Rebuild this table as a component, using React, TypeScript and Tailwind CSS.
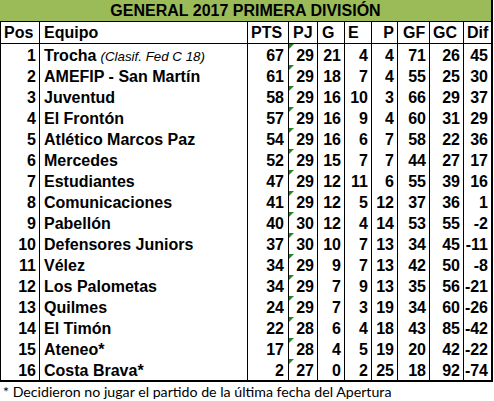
import React from 'react';

type Row = {
  pos: number;
  team: string;
  note?: string;
  stats: number[]; // PTS PJ G E P GF GC Dif
};

const rows: Row[] = [
  { pos: 1, team: 'Trocha', note: '(Clasif. Fed C 18)', stats: [67, 29, 21, 4, 4, 71, 26, 45] },
  { pos: 2, team: 'AMEFIP - San Martín', stats: [61, 29, 18, 7, 4, 55, 25, 30] },
  { pos: 3, team: 'Juventud', stats: [58, 29, 16, 10, 3, 66, 29, 37] },
  { pos: 4, team: 'El Frontón', stats: [57, 29, 16, 9, 4, 60, 31, 29] },
  { pos: 5, team: 'Atlético Marcos Paz', stats: [54, 29, 16, 6, 7, 58, 22, 36] },
  { pos: 6, team: 'Mercedes', stats: [52, 29, 15, 7, 7, 44, 27, 17] },
  { pos: 7, team: 'Estudiantes', stats: [47, 29, 12, 11, 6, 55, 39, 16] },
  { pos: 8, team: 'Comunicaciones', stats: [41, 29, 12, 5, 12, 37, 36, 1] },
  { pos: 9, team: 'Pabellón', stats: [40, 30, 12, 4, 14, 53, 55, -2] },
  { pos: 10, team: 'Defensores Juniors', stats: [37, 30, 10, 7, 13, 34, 45, -11] },
  { pos: 11, team: 'Vélez', stats: [34, 29, 9, 7, 13, 42, 50, -8] },
  { pos: 12, team: 'Los Palometas', stats: [34, 29, 7, 9, 13, 35, 56, -21] },
  { pos: 13, team: 'Quilmes', stats: [24, 29, 7, 3, 19, 34, 60, -26] },
  { pos: 14, team: 'El Timón', stats: [22, 28, 6, 4, 18, 43, 85, -42] },
  { pos: 15, team: 'Ateneo*', stats: [17, 28, 4, 5, 19, 20, 42, -22] },
  { pos: 16, team: 'Costa Brava*', stats: [2, 27, 0, 2, 25, 18, 92, -74] },
];

const gridCols = 'grid grid-cols-[39px_208px_41px_29px_27px_27px_26px_32px_34px_27px]';
const cell = 'border-r border-black whitespace-nowrap';

// Excel's "number stored as text" corner marker
function TextFlag() {
  return (
    <svg className="absolute left-0 top-0" width="5" height="5" viewBox="0 0 5 5">
      <polygon points="0,0 5,0 0,5" fill="#1f8a1f" />
    </svg>
  );
}

export default function App() {
  return (
    <div className="w-[494px] h-[401px] bg-white text-black font-['Liberation_Sans',Arial,sans-serif]">
      <div className="w-[493px] border-r-2 border-b-2 border-black">
        {/* Title */}
        <div className="h-[22px] bg-[#9bbb59] border-b border-black text-center text-[16px] font-bold leading-[22px]">
          GENERAL 2017 PRIMERA DIVISIÓN
        </div>

        {/* Header */}
        <div className={`${gridCols} h-[22px] border-l border-b border-black text-[16px] font-bold leading-[21px]`}>
          <div className={`${cell} pl-[3px]`}>Pos</div>
          <div className={`${cell} pl-[4px]`}>Equipo</div>
          <div className={`${cell} pl-[3px]`}>PTS</div>
          <div className={`${cell} pl-[4px]`}>PJ</div>
          <div className={`${cell} pl-[4px]`}>G</div>
          <div className={`${cell} pl-[3px]`}>E</div>
          <div className={`${cell} text-right pr-[3px]`}>P</div>
          <div className={`${cell} pl-[5px]`}>GF</div>
          <div className={`${cell} pl-[3px]`}>GC</div>
          <div className="pl-[3px] whitespace-nowrap">Dif</div>
        </div>

        {/* Rows */}
        {rows.map((r) => (
          <div
            key={r.pos}
            className={`${gridCols} h-[21px] border-l border-black text-[16px] font-bold leading-[23px]`}
          >
            <div className={`${cell} text-right pr-[3px]`}>{r.pos}</div>
            <div className={`${cell} pl-[4px]`}>
              {r.team}
              {r.note && (
                <span className="ml-[4px] text-[13.33px] font-normal italic">{r.note}</span>
              )}
            </div>
            {r.stats.map((v, i) => (
              <div
                key={i}
                className={`${i < 7 ? cell : 'whitespace-nowrap'} relative text-right ${i === 0 ? 'pr-[4px]' : 'pr-[3px]'}`}
              >
                {i === 1 && <TextFlag />}
                {v}
              </div>
            ))}
          </div>
        ))}
      </div>

      {/* Footnote */}
      <div className="pl-[3px] pt-[1px] text-[14.2px] leading-[18px] font-['Lato','Noto_Sans',sans-serif]">
        * Decidieron no jugar el partido de la última fecha del Apertura
      </div>
    </div>
  );
}
